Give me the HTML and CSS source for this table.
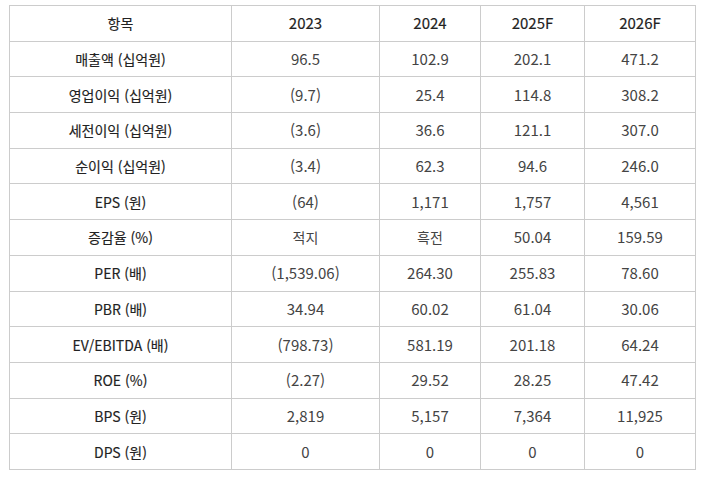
FILE: index.html
```html
<!DOCTYPE html>
<html lang="ko">
<head>
<meta charset="utf-8">
<link rel="stylesheet" href="styles.css">
</head>
<body>
<table class="fin">
  <colgroup>
    <col class="c1"><col class="c2"><col class="c3"><col class="c4"><col class="c5">
  </colgroup>
  <thead>
    <tr><th>항목</th><th class="yr">2023</th><th class="yr">2024</th><th class="yr">2025F</th><th class="yr">2026F</th></tr>
  </thead>
  <tbody>
    <tr><th>매출액 (십억원)</th><td>96.5</td><td>102.9</td><td>202.1</td><td>471.2</td></tr>
    <tr><th>영업이익 (십억원)</th><td>(9.7)</td><td>25.4</td><td>114.8</td><td>308.2</td></tr>
    <tr><th>세전이익 (십억원)</th><td>(3.6)</td><td>36.6</td><td>121.1</td><td>307.0</td></tr>
    <tr><th>순이익 (십억원)</th><td>(3.4)</td><td>62.3</td><td>94.6</td><td>246.0</td></tr>
    <tr><th>EPS (원)</th><td>(64)</td><td>1,171</td><td>1,757</td><td>4,561</td></tr>
    <tr><th>증감율 (%)</th><td class="ko">적지</td><td class="ko">흑전</td><td>50.04</td><td>159.59</td></tr>
    <tr><th>PER (배)</th><td>(1,539.06)</td><td>264.30</td><td>255.83</td><td>78.60</td></tr>
    <tr><th>PBR (배)</th><td>34.94</td><td>60.02</td><td>61.04</td><td>30.06</td></tr>
    <tr><th>EV/EBITDA (배)</th><td>(798.73)</td><td>581.19</td><td>201.18</td><td>64.24</td></tr>
    <tr><th>ROE (%)</th><td>(2.27)</td><td>29.52</td><td>28.25</td><td>47.42</td></tr>
    <tr><th>BPS (원)</th><td>2,819</td><td>5,157</td><td>7,364</td><td>11,925</td></tr>
    <tr><th>DPS (원)</th><td>0</td><td>0</td><td>0</td><td>0</td></tr>
  </tbody>
</table>
</body>
</html>
```

FILE: styles.css
```css
html, body {
  margin: 0;
  padding: 0;
  background: #ffffff;
}
body {
  padding: 5px 0 0 9px;
  font-family: "Noto Sans CJK KR", "Noto Sans", sans-serif;
  font-size: 14px;
  color: #333333;
}
.fin {
  border-collapse: collapse;
  table-layout: fixed;
  width: 687px;
}
.c1 { width: 222px; }
.c2 { width: 148px; }
.c3 { width: 101px; }
.c4 { width: 104px; }
.c5 { width: 111px; }
.fin th, .fin td {
  border: 1px solid #cccccc;
  height: 34.7px;
  padding: 0;
  text-align: center;
  vertical-align: middle;
  line-height: 20px;
  white-space: nowrap;
}
.fin th {
  font-weight: 400;
  color: #222222;
  -webkit-text-stroke: 0.15px #222222;
}
.fin th.yr {
  font-size: 15px;
}
.fin td {
  font-weight: 400;
  font-size: 15px;
  color: #444444;
}
.fin td.ko {
  font-size: 14px;
}
```
